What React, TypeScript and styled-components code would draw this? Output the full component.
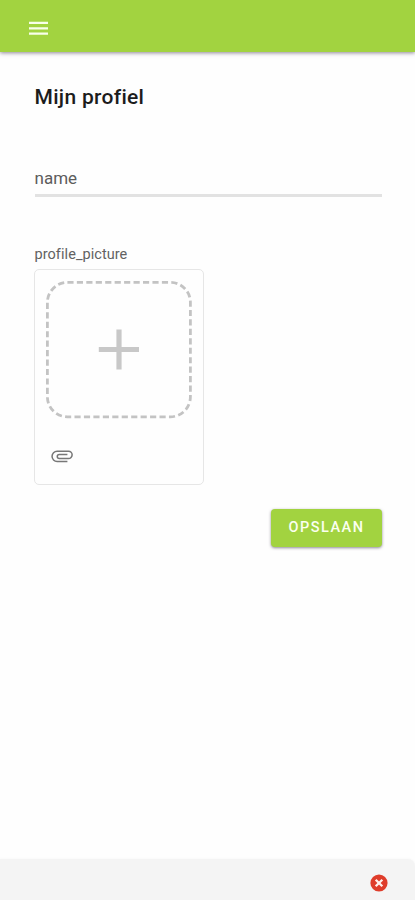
import React from "react";
import styled, { createGlobalStyle } from "styled-components";

const GlobalStyle = createGlobalStyle`
  *, *::before, *::after { box-sizing: border-box; }
  body { margin: 0; background: #fefefe; font-family: Roboto, sans-serif; }
`;

const Screen = styled.div`
  display: flex;
  flex-direction: column;
  height: 900px;
  background: #fefefe;
  overflow: hidden;
`;

const AppBar = styled.header`
  flex: none;
  display: flex;
  align-items: center;
  height: 52px;
  padding: 4px 26px 0;
  background: #a2d340;
  box-shadow: 0 1px 4px rgba(50, 35, 60, 0.55);
`;

const MenuButton = styled.button`
  display: flex;
  padding: 0;
  border: 0;
  background: none;
`;

const Content = styled.main`
  flex: 1;
  display: flex;
  flex-direction: column;
  padding: 33px 33.5px 0 34.5px;
`;

const Title = styled.h1`
  margin: 0;
  font-size: 21px;
  line-height: 25px;
  font-weight: 500;
  letter-spacing: 0.3px;
  color: #1c1c1c;
`;

const TextField = styled.div`
  height: 40px;
  margin-top: 47px;
  padding-top: 10px;
  border-bottom: 3px solid #e2e2e2;
  font-size: 17px;
  line-height: 22px;
  letter-spacing: 0;
  color: #5c5c5c;
`;

const UploadLabel = styled.label`
  margin-top: 49px;
  font-size: 14.5px;
  line-height: 18px;
  letter-spacing: 0.06px;
  color: #626262;
`;

const UploadCard = styled.section`
  display: flex;
  flex-direction: column;
  width: 170px;
  height: 216px;
  margin: 5px 0 0 -0.5px;
  padding: 11px 10px;
  border: 1px solid #e6e6e6;
  border-radius: 5px;
`;

const DropZone = styled.svg`
  display: block;
  width: 148px;
  height: 138px;
`;

const Attach = styled.svg`
  display: block;
  width: 26px;
  height: 26px;
  margin: 24px 0 0 4px;
`;

const SaveButton = styled.button`
  align-self: flex-end;
  width: 111px;
  height: 38px;
  margin: 23.5px 0 0;
  padding: 0 0 0 1px;
  border: 0;
  border-radius: 4px;
  background: #a2d340;
  box-shadow: 0 1px 3px rgba(50, 40, 60, 0.55);
  color: #fbfff0;
  font: 500 14.5px/38px Roboto, sans-serif;
  letter-spacing: 1.5px;
`;

const Footer = styled.footer`
  flex: none;
  display: flex;
  justify-content: flex-end;
  height: 41px;
  padding: 15px 27px 0;
  border-radius: 0 7px 0 0;
  background: #f4f4f4;
  box-shadow: 0 0 3px #f5f5f5;
`;

export default function App() {
  return (
    <>
      <GlobalStyle />
      <Screen>
        <AppBar>
          <MenuButton aria-label="Menu">
            <svg width="25" height="25" viewBox="0 0 25 25">
              <path d="M3 6.9H22M3 12.4H22M3 17.7H22" stroke="#f8ffe9" strokeWidth="2.2" />
            </svg>
          </MenuButton>
        </AppBar>
        <Content>
          <Title>Mijn profiel</Title>
          <TextField>name</TextField>
          <UploadLabel>profile_picture</UploadLabel>
          <UploadCard>
            <DropZone viewBox="0 0 148 138" fill="none">
              <rect x="2.4" y="1.4" width="143" height="134.4" rx="20" stroke="#c3c3c3" strokeWidth="2.8" pathLength="522.5" strokeDasharray="6.2 3.3" />
              <path d="M53.8 68.5H94M74 48.4V88.6" stroke="#c8c8c8" strokeWidth="5.2" />
            </DropZone>
            <Attach viewBox="0 0 24 24" fill="none">
              <path d="M17 17H7.5a4.7 4.7 0 0 1 0-9.4H18a3.3 3.3 0 0 1 0 6.7H9.5a1.85 1.85 0 0 1 0-3.7H17" stroke="#777" strokeWidth="1.4" />
            </Attach>
          </UploadCard>
          <SaveButton>OPSLAAN</SaveButton>
        </Content>
        <Footer>
          <svg width="18" height="18" viewBox="0 0 18 18">
            <circle cx="9" cy="9" r="8.6" fill="#df3d2b" />
            <path d="M5.7 5.7L12.3 12.3M12.3 5.7L5.7 12.3" stroke="#fff0ec" strokeWidth="2.3" />
          </svg>
        </Footer>
      </Screen>
    </>
  );
}
